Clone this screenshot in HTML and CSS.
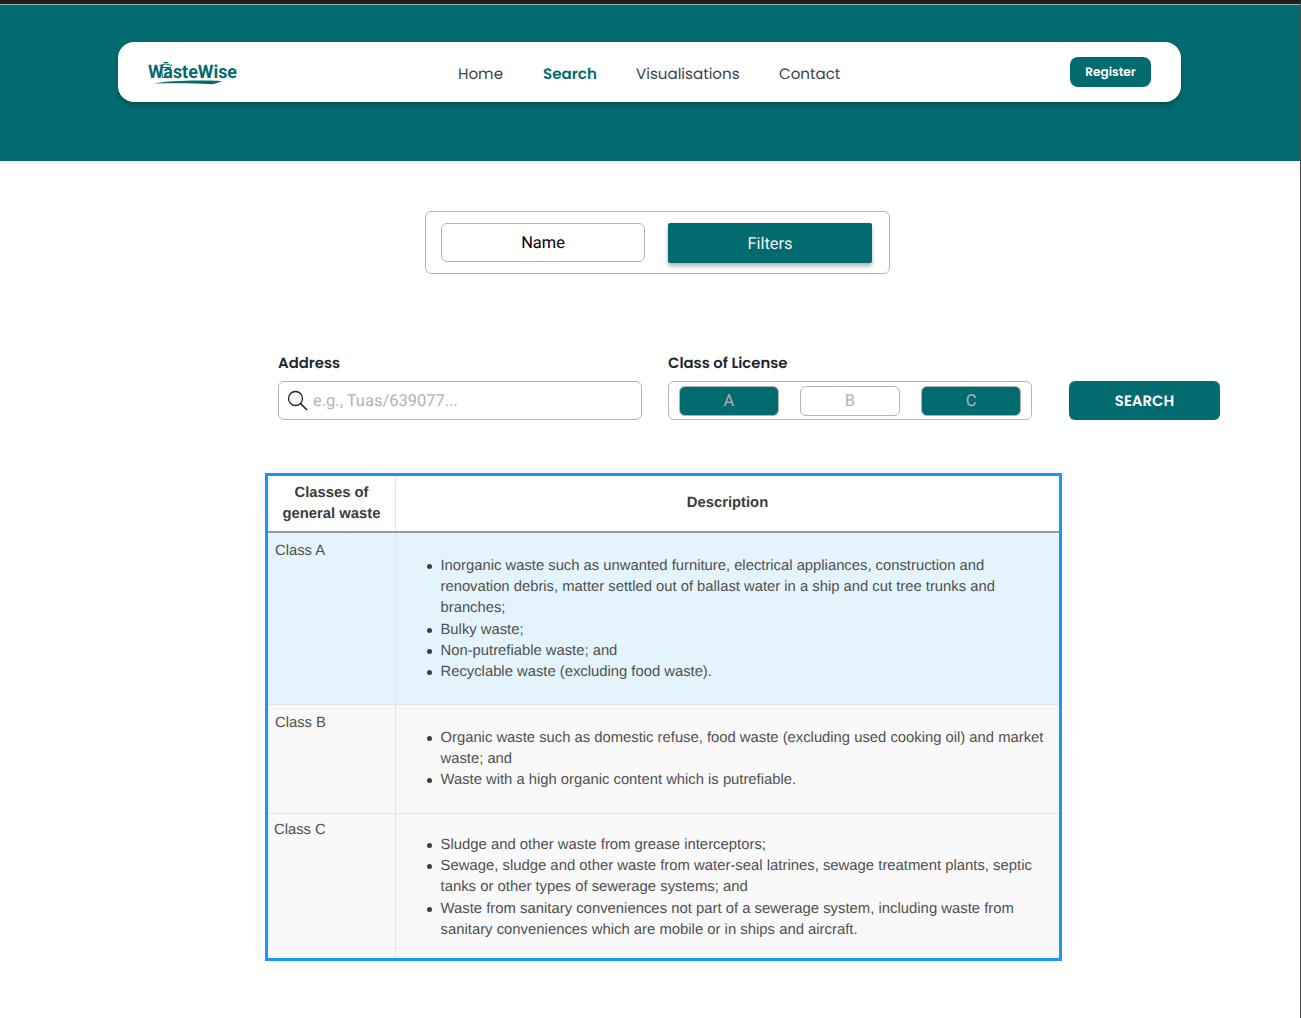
FILE: index.html
```html
<!DOCTYPE html>
<html lang="en">
<head>
<meta charset="utf-8">
<title>WasteWise – Search</title>
<link rel="stylesheet" href="styles.css">
</head>
<body>
<div class="page">
  <header class="hero">
    <nav class="navbar">
      <svg class="logo" width="96" height="30" viewBox="0 0 96 30" role="img" aria-label="WasteWise">
        <text class="logo-text" x="3" y="21" textLength="89" lengthAdjust="spacingAndGlyphs">WasteWise</text>
        <g fill="none" stroke="#026b70" stroke-width="1">
          <path d="M14.500 8.500Q21 5.500 27 8.500M19 6.500V5.500H23V6.500"/>
          <path d="M16 10.500H26M16.500 10.500L17.500 20.500H21M25.500 10V20"/>
        </g>
        <path fill="#026b70" d="M9 26.500C27 23.500 50 23 77 24C74 25.500 71 27 67 27.200C48 26 28 26 9 26.500Z"/>
      </svg>
      <div class="links">
        <a class="home">Home</a>
        <a class="current">Search</a>
        <a class="visuals">Visualisations</a>
        <a class="contact">Contact</a>
      </div>
      <button class="register">Register</button>
    </nav>
  </header>
  <main>
    <div class="tabs">
      <button class="tab">Name</button>
      <button class="tab active">Filters</button>
    </div>
    <form class="search">
      <div class="field">
        <span class="label address">Address</span>
        <div class="control input">
          <svg width="22" height="22" viewBox="0 0 22 22" fill="none" stroke="#222" stroke-width="1.300"><circle cx="8.500" cy="8.500" r="7"/><path d="M13.500 13.500L20 20" stroke-width="1.600"/></svg>
          <span class="hint">e.g., Tuas/639077...</span>
        </div>
      </div>
      <div class="field">
        <span class="label license">Class of License</span>
        <div class="control classes">
          <span class="chip on">A</span>
          <span class="chip">B</span>
          <span class="chip on">C</span>
        </div>
      </div>
      <button class="submit" type="button">SEARCH</button>
    </form>
    <section class="guide">
      <div class="row head">
        <div class="name">Classes of<br>general waste</div>
        <div class="desc">Description</div>
      </div>
      <div class="row a">
        <div class="name">Class A</div>
        <ul class="desc">
          <li>Inorganic waste such as unwanted furniture, electrical appliances, construction and<br>renovation debris, matter settled out of ballast water in a ship and cut tree trunks and<br>branches;</li>
          <li>Bulky waste;</li>
          <li>Non-putrefiable waste; and</li>
          <li>Recyclable waste (excluding food waste).</li>
        </ul>
      </div>
      <div class="row b">
        <div class="name">Class B</div>
        <ul class="desc">
          <li>Organic waste such as domestic refuse, food waste (excluding used cooking oil) and market<br>waste; and</li>
          <li>Waste with a high organic content which is putrefiable.</li>
        </ul>
      </div>
      <div class="row c">
        <div class="name">Class C</div>
        <ul class="desc">
          <li>Sludge and other waste from grease interceptors;</li>
          <li>Sewage, sludge and other waste from water-seal latrines, sewage treatment plants, septic<br>tanks or other types of sewerage systems; and</li>
          <li>Waste from sanitary conveniences not part of a sewerage system, including waste from<br>sanitary conveniences which are mobile or in ships and aircraft.</li>
        </ul>
      </div>
    </section>
  </main>
</div>
</body>
</html>
```
FILE: styles.css
```css
* { box-sizing: border-box; }
body { margin: 0; background: #fff; text-rendering: geometricPrecision; }
button { font: inherit; border: 0; padding: 0; margin: 0; text-rendering: inherit; }
.page { width: 1301px; height: 1018px; overflow: hidden; border-top: 4px solid #1e1e1e; border-right: 1px solid #4a4a4a; }
.hero { height: 157px; background: #026b70; border-top: 1px solid #8fb5b7; padding: 37px 0 0 118px; }
.navbar { display: flex; align-items: center; width: 1063px; height: 60px; padding: 0 30px 0 27px; background: #fff; border-radius: 16px; box-shadow: 0 3px 4px rgba(0,0,0,.25); }
.logo { flex: none; }
.logo-text { font: 700 18.500px Roboto, sans-serif; fill: #026b70; }
.links, .register, .label, .submit { font-family: Poppins, Inter, sans-serif; }
.links { display: flex; gap: 40px; margin-left: 217px; padding-top: 5px; font-size: 15.100px; line-height: 24px; color: #3d434b; white-space: nowrap; }
.home { width: 45px; }
.links .current { width: 53px; font-weight: 600; color: #026b70; }
.visuals { width: 103px; }
.contact { width: 61px; }
.register { width: 81px; height: 30px; margin-left: auto; padding-top: 2px; border-radius: 8px; background: #026b70; color: #fff; font-size: 12.100px; font-weight: 600; }
.tabs { display: flex; gap: 23px; width: 465px; height: 63px; margin: 50px 0 0 425px; padding: 11px 15px; border: 1.500px solid #b3b3b3; border-radius: 6px; font: 16.400px Roboto, sans-serif; }
.tab { width: 204px; height: 39px; padding-top: 2px; border: 1.500px solid #b3b3b3; border-radius: 6px; background: #fff; color: #000; }
.tab.active { height: 40px; border: 0; border-radius: 2px; background: #026b70; color: #f1f1f1; box-shadow: 0 3px 4px rgba(0,0,0,.3); }
.search { display: flex; align-items: flex-end; gap: 26px; margin: 78px 0 0 278px; }
.field { width: 364px; }
.label { display: block; height: 29px; padding-top: 1px; font-size: 14.850px; line-height: 22px; font-weight: 600; color: #212832; white-space: nowrap; }
.control { display: flex; align-items: center; height: 39px; border: 1.500px solid #b3b3b3; border-radius: 6px; font: 16.500px Roboto, sans-serif; color: #b3b3b3; }
.input { padding-left: 8px; gap: 4px; }
.hint { padding-top: 2px; }
.classes { gap: 21px; padding-left: 10px; }
.chip { display: flex; align-items: center; justify-content: center; width: 100px; height: 30px; padding-top: 2px; border: 1.500px solid #b3b3b3; border-radius: 6px; }
.on { background: #026b70; }
.submit { width: 151px; height: 39px; margin-left: 11px; padding-top: 2px; border-radius: 6px; background: #026b70; color: #fff; font-size: 14.900px; font-weight: 600; }
.guide { width: 797px; height: 488px; margin: 53px 0 0 265px; border: 3px solid #1298ff; font: 14.800px/21.200px "Liberation Sans", Arial, sans-serif; color: #505050; background: #f9f9f9; }
.row { display: grid; grid-template-columns: 128px 1fr; border-bottom: 1px solid #e1e5e6; }
.row .name { padding: 8px 0 0 7px; border-right: 1px solid #e1e5e6; }
.head { height: 57px; background: #fff; color: #3b3b3b; font-weight: 700; text-align: center; border-bottom: 2px solid #999; }
.row.head .name { padding: 7px 0 0; }
.head .desc { padding-top: 17px; }
ul.desc { margin: 0; padding: 23px 0 0 44.500px; white-space: nowrap; list-style: none; }
.desc li::before { content: ""; float: left; width: 5px; height: 5px; margin: 8px 0 0 -14px; border-radius: 50%; background: #3d3d3d; }
.a { height: 172px; background: #e3f4fc; }
.b { height: 109px; }
.c { height: 144px; border: 0; }
.row.c .name { padding: 6px 0 0 6px; }
.c .desc { padding-top: 21px; font-size: 14.860px; }
```
